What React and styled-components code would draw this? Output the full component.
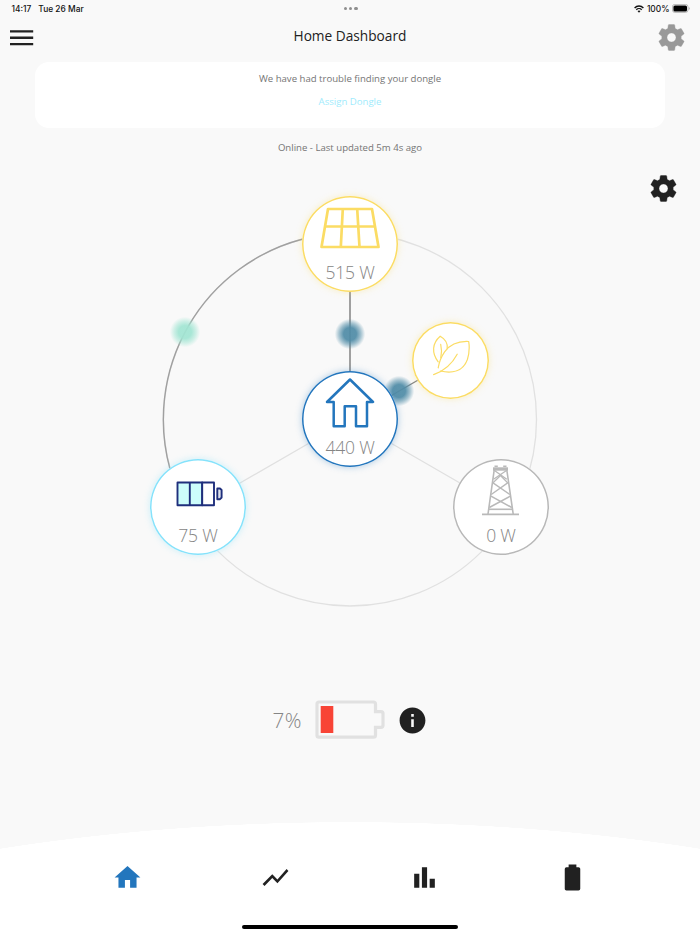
import React from "react";
import styled, { createGlobalStyle } from "styled-components";
import { MdBarChart, MdShowChart, MdInfo } from "react-icons/md";

const nodes = [
  { id: "solar", x: 350, y: 78, size: 96, color: "#fbdc64", glow: "rgba(251, 220, 100, 0.35)", value: "515 W" },
  { id: "home", x: 350, y: 253, size: 96, color: "#2376bd", glow: "rgba(35, 118, 189, 0.35)", value: "440 W" },
  { id: "battery", x: 198, y: 341, size: 96, color: "#85e2fb", glow: "rgba(133, 226, 251, 0.4)", value: "75 W" },
  { id: "grid", x: 501, y: 341, size: 96, color: "#b8b8b8", glow: "transparent", value: "0 W" },
  { id: "eco", x: 450.5, y: 194.5, size: 77, color: "#fbdc64", glow: "rgba(251, 220, 100, 0.35)" },
];

const CogIcon = () => (
  <svg width="31" height="31" viewBox="0 0 24 24" fill="currentColor" stroke="currentColor" strokeWidth="0.3">
    <path d="M12 15.5A3.5 3.5 0 0 1 8.5 12A3.5 3.5 0 0 1 12 8.5A3.5 3.5 0 0 1 15.5 12A3.5 3.5 0 0 1 12 15.5M19.43 12.97C19.47 12.65 19.5 12.33 19.5 12C19.5 11.67 19.47 11.34 19.43 11L21.54 9.37C21.73 9.22 21.78 8.95 21.66 8.73L19.66 5.27C19.54 5.05 19.27 4.96 19.05 5.05L16.56 6.05C16.04 5.66 15.5 5.32 14.87 5.07L14.5 2.42C14.46 2.18 14.25 2 14 2H10C9.75 2 9.54 2.18 9.5 2.42L9.13 5.07C8.5 5.32 7.96 5.66 7.44 6.05L4.95 5.05C4.73 4.96 4.46 5.05 4.34 5.27L2.34 8.73C2.21 8.95 2.27 9.22 2.46 9.37L4.57 11C4.53 11.34 4.5 11.67 4.5 12C4.5 12.33 4.53 12.65 4.57 12.97L2.46 14.63C2.27 14.78 2.21 15.05 2.34 15.27L4.34 18.73C4.46 18.95 4.73 19.03 4.95 18.95L7.44 17.94C7.96 18.34 8.5 18.68 9.13 18.93L9.5 21.58C9.54 21.82 9.75 22 10 22H14C14.25 22 14.46 21.82 14.5 21.58L14.87 18.93C15.5 18.67 16.04 18.34 16.56 17.94L19.05 18.95C19.27 19.03 19.54 18.95 19.66 18.73L21.66 15.27C21.78 15.05 21.73 14.78 21.54 14.63L19.43 12.97Z" />
  </svg>
);

const MenuIcon = () => (
  <svg width="24" height="16" viewBox="0 0 24 16" fill="#212121">
    <path d="M0 0.2H23.2V2.6H0ZM0 6.6H23.2V9H0ZM0 12.9H23.2V15.3H0Z" />
  </svg>
);

const SolarIcon = () => (
  <svg width="60" height="42" viewBox="0 0 60 42" fill="none" stroke="#fbdc64" strokeWidth="2.7" strokeLinejoin="round">
    <path d="M8 2H52L58.5 40H1.5Z M5 19.5H55.5 M22.8 2L20.8 40 M37.2 2L39.5 40" />
  </svg>
);

const HouseIcon = () => (
  <svg width="50" height="50" viewBox="0 0 50 50" fill="none" stroke="#2376bd" strokeWidth="2.5" strokeLinejoin="round">
    <path d="M25 1.5L48 24H42V48.2H31V28.2H19.7V48.2H8.7V24H2Z" />
  </svg>
);

const BatteryIcon = () => (
  <svg width="47" height="26" viewBox="0 0 47 26" stroke="#1f2f7c" strokeWidth="1.9" strokeLinejoin="round">
    <path d="M1.5 1.5H26.2V24.3H1.5Z" fill="#cdfdfb" />
    <path d="M26.2 1.5H38V24.3H26.2Z" fill="#fff" />
    <path d="M13.8 1.5V24.3" />
    <path d="M41.3 7.5H44L45.6 9V16.5L44 18.2H41.3Z" fill="#dfe3ee" />
  </svg>
);

const PylonIcon = () => (
  <svg width="38" height="52" viewBox="0 0 38 52" fill="none" stroke="#b9b9b9" strokeWidth="1.6">
    <path d="M0 49.4H37" />
    <path d="M12.2 5L6 49 M24.8 5L31.2 49" />
    <path d="M11 4H26" strokeWidth="3.4" />
    <path d="M12.5 1.2H15.8 M21.2 1.2H24.5" />
    <path d="M12.5 5.5L24.8 14.2 M24.5 5.5L11.5 14.2" strokeWidth="1.3" />
    <path d="M18.5 10.5L25.7 17.8L9.2 29.5 M18.5 10.5L11 17.8L27.8 29.5" strokeWidth="1.4" />
    <path d="M9 31.2L29.8 42.5 M28.3 31.2L7.3 42.5" strokeWidth="1.5" />
    <path d="M7 44.3H30.4" strokeWidth="1.6" />
  </svg>
);

const LeafIcon = () => (
  <svg width="38" height="41" viewBox="0 0 38 41" fill="none" stroke="#fbdc64" strokeWidth="1.2" strokeLinecap="round" strokeLinejoin="round">
    <path d="M1.6 39.6C12 36 20 29 25.2 19.2" />
    <path d="M8.4 36C20 38.8 31 36.5 35.4 24.5C37.2 18.5 37.6 12 36.7 6.5C27 6 18 9.5 12.6 16.8C9 22 7 28 6.2 32.8" />
    <path d="M6.2 26.8C-0.6 18 0.2 8 8.2 1.2C13.2 4 15.8 9 15.2 13.6" />
    <path d="M8.7 9.4C9.8 14 9.8 18.5 8.8 22.6" />
  </svg>
);

const icons = {
  solar: <SolarIcon />,
  home: <HouseIcon />,
  battery: <BatteryIcon />,
  grid: <PylonIcon />,
  eco: <LeafIcon />,
};

const App = () => {
  return (
    <Screen>
      <GlobalStyle />
      <StatusBar>
        <StatusGroup>
          <span>14:17</span>
          <span>Tue 26 Mar</span>
        </StatusGroup>
        <Dots>
          <i />
          <i />
          <i />
        </Dots>
        <StatusRight>
          <svg width="10" height="8" viewBox="0 0 10 8" fill="none" stroke="#111" strokeWidth="1.4">
            <path d="M0.6 3C3 0.4 7 0.4 9.4 3" />
            <path d="M2.3 4.7C3.8 3.2 6.2 3.2 7.7 4.7" />
            <path d="M5 7.7L3.5 6.1C4.3 5.4 5.7 5.4 6.5 6.1Z" fill="#111" stroke="none" />
          </svg>
          <span>100%</span>
          <svg width="18" height="9" viewBox="0 0 18 9">
            <rect x="0.4" y="0.4" width="15.6" height="8" rx="2.4" fill="none" stroke="#aaa" strokeWidth="0.8" />
            <rect x="1.4" y="1.4" width="13.6" height="6" rx="1.5" fill="#000" />
            <path d="M16.8 3V6Q17.8 5.4 17.8 4.5T16.8 3" fill="#aaa" />
          </svg>
        </StatusRight>
      </StatusBar>

      <Header>
        <MenuButton aria-label="Menu">
          <MenuIcon />
        </MenuButton>
        <h1>Home Dashboard</h1>
        <IconButton $color="#999999" aria-label="Settings">
          <CogIcon />
        </IconButton>
      </Header>

      <Notice>
        <p>We have had trouble finding your dongle</p>
        <a>Assign Dongle</a>
      </Notice>
      <Updated>Online - Last updated 5m 4s ago</Updated>

      <Flow>
        <IconButton $color="#212121" aria-label="Flow settings">
          <CogIcon />
        </IconButton>
        <Wires width="700" height="500" viewBox="0 0 700 500" fill="none">
          <circle cx="350" cy="253.5" r="186.5" stroke="#e1e1e1" strokeWidth="1.3" />
          <path d="M350 253.5L198.5 341M350 253.5L501.5 341" stroke="#e0e0e0" strokeWidth="1.3" />
          <path d="M170 303A186.5 186.5 0 0 1 303 73" stroke="#a0a0a0" strokeWidth="1.4" />
          <path d="M350 78.5V253.5" stroke="#8a8a8a" strokeWidth="1.6" />
          <path d="M350 253.5L451 195" stroke="#858585" strokeWidth="1.4" />
        </Wires>
        <Pulse $x={185} $y={165.5} $color="162, 229, 211" />
        <Pulse $x={349.5} $y={167.5} $color="80, 140, 167" />
        <Pulse $x={398.5} $y={225} $color="80, 140, 167" />
        {nodes.map((node) => (
          <Node key={node.id} $x={node.x} $y={node.y} $size={node.size} $color={node.color} $glow={node.glow}>
            <NodeIcon $full={!node.value} $shift={node.id === "battery"}>
              {icons[node.id]}
            </NodeIcon>
            {node.value && <p>{node.value}</p>}
          </Node>
        ))}
      </Flow>

      <Charge>
        <p>7%</p>
        <svg width="70" height="40" viewBox="0 0 70 40">
          <path
            d="M4 2H58.5Q60.5 2 60.5 4V11.7H66Q68 11.7 68 13.7V25.3Q68 27.3 66 27.3H60.5V35.2Q60.5 37.2 58.5 37.2H4Q2 37.2 2 35.2V4Q2 2 4 2Z"
            fill="none"
            stroke="#e1e1e1"
            strokeWidth="3.2"
          />
          <rect x="5.7" y="6" width="12.6" height="27" fill="#f84436" />
        </svg>
        <MdInfo />
      </Charge>

      <TabBar>
        <Tab $active>
          <svg viewBox="0 0 24 24" fill="currentColor">
            <path d="M10 20V14H14V20H19V12H22L12 3L2 12H5V20H10Z" />
          </svg>
        </Tab>
        <Tab>
          <MdShowChart />
        </Tab>
        <Tab>
          <MdBarChart />
        </Tab>
        <Tab>
          <svg viewBox="0 0 24 24" fill="currentColor">
            <path d="M16.67 4H15V2H9V4H7.33A1.33 1.33 0 0 0 6 5.33V20.67C6 21.4 6.6 22 7.33 22H16.67A1.33 1.33 0 0 0 18 20.67V5.33C18 4.6 17.4 4 16.67 4Z" />
          </svg>
        </Tab>
        <HomeIndicator />
      </TabBar>
    </Screen>
  );
};

export default App;

const GlobalStyle = createGlobalStyle`
  * {
    box-sizing: border-box;
    margin: 0;
    padding: 0;
  }

  body {
    background-color: #f9f9f9;
    font-family: "Open Sans", "Noto Sans", sans-serif;
  }
`;

const Screen = styled.div`
  width: 700px;
  height: 934px;
  display: flex;
  flex-direction: column;
  background-color: #f9f9f9;
  overflow: hidden;
`;

const StatusBar = styled.div`
  height: 17px;
  flex-shrink: 0;
  display: grid;
  grid-template-columns: 1fr auto 1fr;
  align-items: center;
  padding: 0 10px 0 11.5px;
  font-family: Inter, sans-serif;
  font-size: 8.4px;
  font-weight: 500;
  color: #111111;
`;

const StatusGroup = styled.div`
  display: flex;
  gap: 7px;
`;

const StatusRight = styled(StatusGroup)`
  justify-content: flex-end;
  align-items: center;
  gap: 2.5px;
`;

const Dots = styled.div`
  display: flex;
  gap: 2px;

  i {
    width: 3.4px;
    height: 3.4px;
    border-radius: 50%;
    background-color: #8e8e8e;
  }
`;

const Header = styled.header`
  height: 45px;
  flex-shrink: 0;
  display: flex;
  align-items: flex-start;
  justify-content: space-between;
  padding: 5px 12.5px 0 9.5px;

  h1 {
    margin: 5px 0 0 3px;
    font-size: 13.7px;
    line-height: 18px;
    font-weight: 400;
    color: #212121;
  }
`;

const MenuButton = styled.button`
  width: 31px;
  height: 31px;
  display: flex;
  align-items: center;
  border: none;
  background: none;
`;

const IconButton = styled.button`
  display: flex;
  border: none;
  background: none;
  color: ${({ $color }) => $color};
`;

const Notice = styled.section`
  height: 66px;
  flex-shrink: 0;
  margin: 0 35px;
  padding-top: 10px;
  border-radius: 14px;
  background-color: #ffffff;
  display: flex;
  flex-direction: column;
  align-items: center;
  gap: 9px;
  font-size: 9.6px;
  line-height: 14px;
  color: #757575;

  a {
    color: #a0ebfd;
  }
`;

const Updated = styled.p`
  height: 38px;
  flex-shrink: 0;
  line-height: 39px;
  text-align: center;
  font-size: 9.6px;
  color: #757575;
`;

const Flow = styled.main`
  position: relative;
  height: 500px;
  flex-shrink: 0;
  display: flex;
  justify-content: flex-end;
  align-items: flex-start;
  padding: 7px 21px 0 0;
`;

const Wires = styled.svg`
  position: absolute;
  top: 0;
  left: 0;
`;

const Pulse = styled.div`
  position: absolute;
  left: ${({ $x }) => $x - 16}px;
  top: ${({ $y }) => $y - 16}px;
  width: 32px;
  height: 32px;
  border-radius: 50%;
  background: radial-gradient(
    circle closest-side,
    rgba(${({ $color }) => $color}, 0.93) 40%,
    rgba(${({ $color }) => $color}, 0.5) 68%,
    rgba(${({ $color }) => $color}, 0) 95%
  );
`;

const Node = styled.div`
  position: absolute;
  left: ${({ $x, $size }) => $x - $size / 2}px;
  top: ${({ $y, $size }) => $y - $size / 2}px;
  width: ${({ $size }) => $size}px;
  height: ${({ $size }) => $size}px;
  border-radius: 50%;
  background-color: #ffffff;
  box-shadow:
    inset 0 0 0 1.5px ${({ $color }) => $color},
    0 0 7px ${({ $glow }) => $glow};
  display: flex;
  flex-direction: column;
  align-items: center;

  p {
    font-size: 17.5px;
    line-height: 24px;
    font-weight: 300;
    letter-spacing: -0.2px;
    color: #858585;
  }
`;

const NodeIcon = styled.div`
  height: ${({ $full }) => ($full ? "67px" : "64px")};
  display: flex;
  align-items: center;
  padding: ${({ $shift }) => ($shift ? "5px 0 0 3px" : "0")};
`;

const Charge = styled.div`
  height: 108px;
  flex-shrink: 0;
  display: flex;
  justify-content: center;
  align-items: center;
  color: #212121;

  p {
    width: 42px;
    font-size: 20.7px;
    font-weight: 300;
    letter-spacing: 0.4px;
    color: #858585;
  }

  > svg:last-child {
    margin-left: 12px;
    font-size: 31px;
  }
`;

const TabBar = styled.nav`
  position: relative;
  flex: 1;
  margin-top: 48px;
  padding: 0 53px;
  display: grid;
  grid-template-columns: repeat(4, 1fr);
  justify-items: center;
  align-items: start;
  background: radial-gradient(ellipse 850px 300px at 350px 300px, #ffffff 99.9%, transparent 100%);
`;

const Tab = styled.button`
  display: flex;
  margin-top: 40px;
  border: none;
  background: none;
  font-size: 31px;
  color: ${({ $active }) => ($active ? "#2376bd" : "#212121")};

  svg {
    width: 31px;
    height: 31px;
  }
`;

const HomeIndicator = styled.div`
  position: absolute;
  left: 242px;
  bottom: 5.5px;
  width: 216px;
  height: 4px;
  border-radius: 2px;
  background-color: #000000;
`;
